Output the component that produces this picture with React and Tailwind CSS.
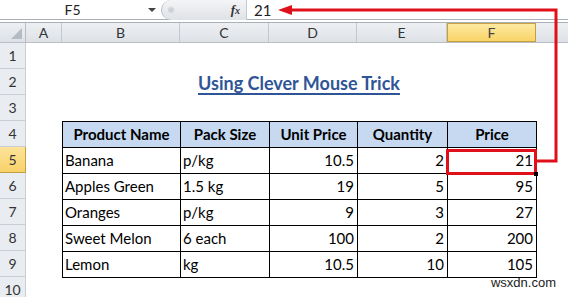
import React from 'react';

const cols = [
  { key: 'A', w: 'w-[36px]' },
  { key: 'B', w: 'w-[118px]' },
  { key: 'C', w: 'w-[89px]' },
  { key: 'D', w: 'w-[88px]' },
  { key: 'E', w: 'w-[90px]' },
  { key: 'F', w: 'w-[89px]' },
];

const rows = [
  ['Banana', 'p/kg', '10.5', '2', '21'],
  ['Apples Green', '1.5 kg', '19', '5', '95'],
  ['Oranges', 'p/kg', '9', '3', '27'],
  ['Sweet Melon', '6 each', '100', '2', '200'],
  ['Lemon', 'kg', '10.5', '10', '105'],
];

const font = { fontFamily: 'Lato, "Open Sans", sans-serif' };

const App = () => {
  return (
    <div className="relative w-[568px] h-[297px] overflow-hidden bg-white text-[#222]" style={font}>
      {/* formula bar */}
      <div className="flex h-[20px] items-center border-b border-[#a9b0b8]">
        <div className="w-[145px] text-center text-[14px] leading-none pt-[1px]">F5</div>
        <div className="w-[14px] flex justify-center">
          <div className="w-0 h-0 border-l-[4px] border-r-[4px] border-t-[4px] border-l-transparent border-r-transparent border-t-[#444]" />
        </div>
        <div className="ml-[2px] flex items-center h-[20px] w-[85px] rounded-l-full bg-gradient-to-b from-[#f4f5f7] to-[#dfe2e6] border-l border-[#b8bec6]">
          <div className="ml-[5px] w-[8px] h-[8px] rounded-full bg-[#cfd3d8] border border-[#e9ebee]" />
          <div className="ml-auto mr-[6px] text-[13px] italic font-bold text-[#333]" style={{ fontFamily: '"Liberation Serif", serif' }}>
            f<span className="text-[10px]">x</span>
          </div>
        </div>
        <div className="h-[20px] border-l border-[#c4c9cf]" />
        <div className="pl-[7px] text-[15px] leading-none pt-[1px]">21</div>
      </div>
      <div className="h-[3px] border-b border-[#a9b0b8]" />

      {/* column headers */}
      <div className="flex h-[20px] bg-gradient-to-b from-[#eef0f3] to-[#dde1e6] border-b border-[#b9bec5] text-[14px] text-[#333]">
        <div className="w-[26px] relative border-r border-[#b9bec5]">
          <svg className="absolute right-[3px] bottom-[3px]" width="11" height="11">
            <polygon points="11,0 11,11 0,11" fill="#b5bbc2" />
          </svg>
        </div>
        {cols.map(c => (
          <div
            key={c.key}
            className={`${c.w} flex items-center justify-center border-r ${
              c.key === 'F'
                ? 'bg-gradient-to-b from-[#fde9a1] to-[#f9d465] border border-[#c4a040] text-[#444]'
                : 'border-[#c4c9cf]'
            }`}
          >
            {c.key}
          </div>
        ))}
      </div>

      {/* sheet body */}
      <div className="flex">
        <div className="w-[26px] flex flex-col text-[14px] text-[#333]">
          {[1, 2, 3, 4, 5, 6, 7, 8, 9, 10].map(n => (
            <div
              key={n}
              className={`h-[26px] flex items-center justify-center border-b border-r ${
                n === 5 ? 'bg-gradient-to-b from-[#fde49a] to-[#f8d169] border-[#c4a040]' : 'bg-[#e9ecf0] border-[#c9ced4]'
              }`}
            >
              {n}
            </div>
          ))}
        </div>

        <div className="flex flex-col pl-[36px]">
          <div className="h-[26px]" />
          <div className="h-[26px] w-[474px] flex items-end justify-center pb-[1px]">
            <span className="text-[18px] leading-[22px] font-bold underline decoration-[1.5px] underline-offset-[3px] text-[#2f5597]">
              Using Clever Mouse Trick
            </span>
          </div>
          <div className="h-[26px]" />
          <table className="border-collapse text-[15px] text-black">
            <thead>
              <tr className="h-[26px] bg-[#c6d9f0]">
                {['Product Name', 'Pack Size', 'Unit Price', 'Quantity', 'Price'].map((h, i) => (
                  <th
                    key={h}
                    className={`border border-black font-bold p-0 ${['w-[118px]', 'w-[89px]', 'w-[88px]', 'w-[90px]', 'w-[89px]'][i]}`}
                  >
                    {h}
                  </th>
                ))}
              </tr>
            </thead>
            <tbody>
              {rows.map((r, ri) => (
                <tr key={ri} className="h-[26px]">
                  {r.map((v, ci) => (
                    <td
                      key={ci}
                      className={`border border-black p-0 ${ci < 2 ? 'text-left pl-[2px]' : 'text-right pr-[3px]'}`}
                    >
                      {v}
                    </td>
                  ))}
                </tr>
              ))}
            </tbody>
          </table>
        </div>
      </div>

      {/* red selection box and arrow */}
      <div className="absolute left-[446px] top-[149px] w-[91px] h-[26px] border-[3px] border-[#e0101a]" />
      <div className="absolute left-[534px] top-[172px] w-[4px] h-[4px] bg-black" />
      <svg className="absolute left-0 top-0 pointer-events-none" width="568" height="297">
        <polyline points="537,161 556,161 556,10 290,10" fill="none" stroke="#e0101a" strokeWidth="3" />
        <polygon points="278,10 292,5 292,15" fill="#e0101a" />
      </svg>

      <div className="absolute right-[12px] bottom-[5px] text-[13px] text-[#222]" style={{ fontFamily: '"Liberation Sans", sans-serif' }}>
        wsxdn.com
      </div>
    </div>
  );
};

export default App;
